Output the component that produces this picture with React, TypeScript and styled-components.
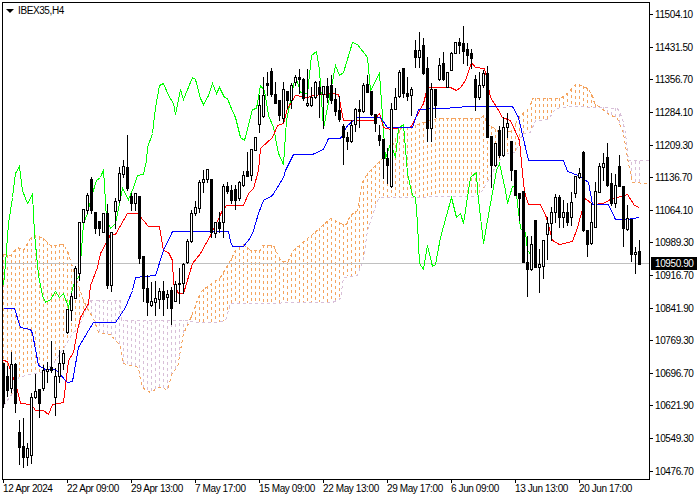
import React from 'react'
import styled, { createGlobalStyle } from 'styled-components'

type Point = [number, number]
// high, body top, body bottom, low, 1 = white candle (all in page pixels)
type Candle = [number, number, number, number, number]

const FIRST_X = 3
const BAR_STEP = 4

const candles: Candle[] = [
  [363, 363, 403, 407, 0], [366, 376, 390, 396, 0], [352, 364, 388, 392, 1], [363, 364, 403, 412, 0],
  [420, 432, 447, 464, 0], [418, 446, 457, 467, 0], [443, 448, 457, 465, 1], [393, 397, 455, 463, 1],
  [374, 391, 397, 398, 1], [389, 389, 403, 417, 0], [365, 370, 388, 390, 1], [362, 369, 371, 382, 1],
  [341, 367, 370, 372, 0], [368, 376, 397, 415, 1], [350, 363, 376, 382, 1], [350, 353, 363, 369, 1],
  [309, 309, 332, 333, 1], [293, 296, 310, 320, 1], [266, 268, 298, 298, 1], [222, 222, 273, 280, 1],
  [209, 209, 222, 222, 1], [193, 195, 210, 213, 1], [177, 179, 210, 213, 0], [212, 212, 228, 233, 0],
  [221, 221, 228, 235, 0], [213, 213, 232, 232, 1], [204, 213, 285, 288, 0], [232, 232, 285, 291, 1],
  [198, 201, 211, 228, 1], [167, 173, 200, 202, 1], [160, 166, 174, 177, 1], [135, 167, 188, 190, 0],
  [193, 196, 203, 210, 0], [193, 193, 203, 210, 1], [196, 196, 258, 263, 0], [256, 256, 288, 301, 0],
  [275, 288, 302, 315, 0], [282, 301, 305, 306, 1], [281, 298, 302, 315, 1], [288, 291, 299, 308, 1],
  [281, 291, 299, 315, 0], [290, 294, 297, 308, 1], [287, 290, 308, 324, 0], [281, 284, 301, 301, 1],
  [268, 283, 284, 303, 1], [263, 264, 283, 293, 1], [239, 241, 262, 263, 1], [210, 213, 241, 242, 1],
  [201, 207, 213, 215, 1], [180, 182, 208, 212, 1], [170, 179, 182, 192, 1], [169, 169, 179, 182, 1],
  [179, 179, 232, 237, 0], [222, 222, 233, 237, 1], [212, 222, 228, 232, 0], [184, 186, 222, 237, 1],
  [182, 186, 191, 193, 0], [185, 190, 200, 203, 0], [185, 189, 200, 209, 0], [181, 182, 198, 200, 1],
  [171, 175, 185, 186, 1], [152, 171, 176, 176, 0], [149, 149, 175, 180, 1], [137, 137, 150, 150, 1],
  [95, 105, 124, 132, 1], [77, 95, 116, 117, 1], [72, 83, 85, 95, 0], [68, 71, 94, 96, 0],
  [82, 94, 103, 103, 0], [100, 100, 115, 120, 0], [82, 89, 118, 122, 1], [91, 91, 100, 108, 0],
  [83, 85, 100, 108, 1], [75, 77, 82, 85, 1], [69, 77, 79, 93, 0], [78, 79, 98, 100, 0],
  [69, 103, 105, 106, 1], [87, 97, 105, 106, 1], [81, 82, 97, 98, 1], [81, 87, 94, 117, 0],
  [86, 86, 94, 128, 1], [78, 86, 97, 102, 0], [75, 85, 100, 103, 0], [88, 99, 111, 115, 0],
  [96, 110, 119, 121, 0], [124, 126, 137, 164, 0], [132, 137, 141, 149, 0], [120, 125, 141, 142, 1],
  [108, 109, 124, 131, 1], [100, 109, 111, 127, 0], [83, 85, 111, 112, 1], [75, 84, 92, 92, 0],
  [91, 91, 114, 115, 0], [114, 114, 123, 131, 0], [125, 135, 140, 145, 0], [139, 139, 158, 178, 0],
  [148, 158, 165, 183, 0], [103, 109, 186, 187, 1], [88, 97, 109, 109, 1], [70, 72, 96, 97, 1],
  [68, 68, 93, 97, 0], [77, 93, 96, 100, 0], [87, 89, 95, 115, 1], [40, 50, 57, 67, 0],
  [32, 50, 57, 67, 1], [38, 45, 73, 74, 0], [57, 68, 128, 141, 0], [83, 89, 128, 141, 1],
  [89, 89, 105, 117, 0], [58, 65, 79, 80, 1], [52, 63, 79, 80, 0], [72, 72, 87, 87, 1],
  [52, 53, 70, 70, 1], [42, 42, 53, 53, 1], [38, 42, 45, 53, 0], [26, 43, 51, 63, 0],
  [43, 49, 55, 65, 0], [49, 53, 58, 68, 0], [75, 79, 97, 110, 0], [72, 85, 97, 99, 1],
  [70, 73, 85, 87, 1], [66, 73, 137, 137, 0], [136, 136, 165, 187, 0], [143, 143, 165, 166, 1],
  [126, 130, 155, 157, 0], [117, 127, 155, 156, 1], [113, 123, 127, 137, 1], [141, 141, 170, 180, 0],
  [170, 170, 195, 195, 0], [193, 193, 198, 220, 0], [191, 191, 262, 262, 0], [236, 262, 269, 296, 0],
  [236, 244, 269, 270, 1], [220, 220, 267, 267, 0], [249, 264, 267, 292, 1], [240, 240, 266, 278, 1],
  [217, 223, 234, 259, 1], [207, 212, 223, 240, 1], [194, 197, 212, 222, 1], [195, 197, 217, 227, 0],
  [200, 212, 217, 227, 1], [203, 212, 222, 225, 0], [192, 202, 217, 225, 1], [176, 176, 193, 197, 1],
  [168, 173, 177, 178, 1], [151, 152, 230, 231, 0], [230, 230, 244, 256, 0], [203, 222, 243, 244, 1],
  [182, 191, 227, 227, 1], [163, 166, 192, 192, 1], [153, 163, 167, 180, 1], [143, 157, 185, 186, 0],
  [173, 183, 203, 205, 0], [174, 185, 203, 207, 1], [155, 166, 186, 186, 0], [186, 186, 228, 246, 0],
  [205, 218, 229, 230, 1], [219, 219, 254, 261, 0], [247, 252, 254, 273, 1], [240, 251, 264, 264, 0],
]

const greenLine: Point[] = [
  [3, 285], [5, 263], [8, 223], [12, 197], [15, 173], [19, 166], [22, 190], [27, 203], [32, 194], [34, 233],
  [38, 275], [42, 295], [45, 302], [50, 299], [55, 291], [59, 297], [63, 293], [68, 307], [73, 284], [79, 275],
  [83, 223], [87, 213], [92, 193], [96, 180], [100, 177], [103, 169], [106, 218], [110, 228], [115, 223],
  [122, 188], [128, 199], [133, 187], [137, 175], [143, 174], [146, 160], [147, 147], [152, 133], [155, 107],
  [159, 85], [163, 83], [168, 95], [173, 103], [175, 114], [180, 89], [183, 99], [192, 77], [195, 79], [200, 98],
  [203, 104], [208, 95], [212, 83], [216, 93], [219, 87], [224, 97], [227, 98], [230, 106], [235, 117], [240, 137],
  [244, 140], [252, 109], [256, 108], [260, 85], [264, 90], [268, 115], [273, 127], [278, 153], [283, 164],
  [286, 120], [295, 75], [300, 92], [307, 93], [311, 55], [316, 51], [319, 70], [323, 128], [335, 65], [339, 75],
  [343, 72], [352, 42], [357, 44], [367, 57], [370, 90], [379, 73], [383, 130], [385, 158], [390, 143], [395, 157],
  [398, 128], [403, 124], [407, 173], [412, 195], [415, 197], [417, 223], [419, 263], [423, 269], [427, 245],
  [432, 266], [435, 264], [440, 237], [451, 197], [456, 217], [460, 213], [463, 223], [470, 177], [476, 172],
  [477, 190], [483, 243], [490, 203], [496, 170], [499, 163], [505, 190], [507, 203], [512, 186], [515, 186],
  [520, 228], [525, 232], [527, 250], [533, 257],
]

const redLine: Point[] = [
  [3, 360], [7, 361], [17, 390], [20, 403], [31, 404], [35, 410], [43, 410], [48, 414], [52, 404], [63, 402],
  [68, 360], [73, 352], [77, 330], [80, 317], [88, 303], [90, 285], [97, 267], [100, 253], [107, 240], [110, 234],
  [115, 234], [127, 213], [137, 213], [143, 220], [148, 226], [159, 226], [163, 250], [168, 252], [172, 260],
  [173, 283], [178, 293], [183, 293], [192, 263], [200, 253], [210, 235], [222, 210], [226, 205], [243, 205],
  [248, 193], [253, 188], [258, 170], [260, 148], [272, 137], [277, 125], [283, 123], [287, 108], [295, 95],
  [307, 97], [313, 95], [330, 93], [338, 94], [343, 120], [373, 120], [379, 113], [383, 127], [390, 129],
  [400, 127], [410, 127], [423, 103], [427, 87], [450, 87], [456, 90], [460, 87], [465, 80], [471, 62], [475, 67],
  [484, 68], [486, 77], [490, 97], [497, 108], [502, 117], [510, 120], [519, 140], [523, 183], [525, 195],
  [528, 204], [540, 204], [546, 217], [552, 240], [559, 244], [572, 241], [577, 227], [585, 198], [592, 204],
  [603, 203], [610, 199], [627, 194], [634, 205], [639, 207],
]

const blueLine: Point[] = [
  [3, 308], [14, 308], [20, 327], [30, 329], [32, 333], [38, 365], [45, 369], [55, 369], [67, 382], [72, 381],
  [78, 347], [88, 330], [93, 322], [115, 322], [125, 307], [132, 290], [135, 277], [155, 275], [163, 250],
  [172, 231], [228, 231], [230, 241], [232, 246], [243, 246], [250, 237], [253, 230], [258, 213], [263, 200],
  [272, 195], [275, 190], [283, 177], [285, 170], [293, 154], [312, 154], [323, 149], [328, 138], [340, 138],
  [347, 125], [357, 117], [380, 117], [387, 127], [412, 127], [418, 109], [460, 107], [463, 106], [512, 106],
  [518, 117], [528, 160], [563, 160], [567, 171], [578, 175], [588, 182], [592, 204], [608, 204], [615, 219],
  [627, 219], [639, 217],
]

const spanA: Point[] = [
  [3, 254], [10, 255], [17, 247], [23, 250], [30, 238], [35, 235], [43, 238], [50, 245], [63, 244], [68, 253],
  [73, 270], [83, 300], [88, 310], [93, 318], [98, 332], [110, 334], [115, 340], [120, 345], [123, 363], [138, 367],
  [140, 380], [143, 388], [150, 392], [158, 387], [167, 389], [172, 372], [177, 367], [183, 333], [188, 323],
  [200, 292], [208, 285], [220, 277], [230, 260], [235, 250], [243, 244], [250, 250], [260, 250], [262, 245],
  [273, 245], [280, 260], [287, 262], [293, 250], [307, 238], [318, 229], [330, 218], [345, 225], [350, 215],
  [357, 210], [362, 182], [367, 173], [377, 163], [390, 150], [400, 128], [415, 125], [420, 123], [437, 118],
  [480, 118], [483, 115], [488, 125], [493, 127], [500, 133], [512, 130], [518, 117], [528, 108], [532, 98],
  [560, 98], [568, 92], [576, 83], [587, 88], [592, 95], [594, 103], [600, 107], [607, 113], [617, 118],
  [623, 133], [628, 163], [632, 182], [647, 183],
]

const spanB: Point[] = [
  [3, 405], [12, 393], [18, 377], [32, 373], [43, 372], [53, 363], [63, 348], [72, 333], [78, 328], [85, 310],
  [90, 300], [120, 300], [121, 320], [185, 320], [197, 322], [217, 322], [225, 320], [230, 303], [332, 302],
  [340, 298], [343, 277], [357, 275], [363, 258], [367, 230], [377, 200], [380, 197], [477, 196], [482, 190],
  [488, 180], [493, 170], [503, 153], [515, 152], [522, 133], [530, 132], [535, 120], [548, 119], [555, 108],
  [570, 106], [600, 107], [617, 108], [622, 118], [625, 133], [628, 160], [648, 160],
]

const prices = [
  '11504.10', '11431.50', '11356.70', '11284.10', '11209.30', '11136.70', '11064.10', '10989.30',
  '10916.70', '10841.90', '10769.30', '10696.70', '10621.90', '10549.30', '10476.70',
]

const times = [
  '12 Apr 2024', '22 Apr 09:00', '29 Apr 13:00', '7 May 17:00', '15 May 09:00',
  '22 May 13:00', '29 May 17:00', '6 Jun 09:00', '13 Jun 13:00', '20 Jun 17:00',
]

const SANDY = '#f4a460'
const THISTLE = '#d8bfd8'

const toPoints = (line: Point[]) => line.map(([x, y]) => `${x + 0.5},${y + 0.5}`).join(' ')

function valueAt(line: Point[], x: number) {
  for (let i = 1; i < line.length; i++) {
    if (x <= line[i][0]) {
      const [x0, y0] = line[i - 1]
      const [x1, y1] = line[i]
      return Math.round(y0 + ((y1 - y0) * (x - x0)) / (x1 - x0 || 1))
    }
  }
  return line[line.length - 1][1]
}

const GlobalStyle = createGlobalStyle`
  html, body {
    margin: 0;
    padding: 0;
    background: #fff;
  }
`

const Terminal = styled.div`
  display: grid;
  grid-template-columns: 650px 50px;
  grid-template-rows: 480px 20px;
  width: 700px;
  height: 500px;
  overflow: hidden;
  background: #fff;
  color: #000;
  font-family: "Liberation Sans", Arial, sans-serif;
  font-size: 10px;
  letter-spacing: -0.4px;
`

const Plot = styled.div`
  position: relative;
  margin: 2px 0 0 2px;
  border: 1px solid #000;
  overflow: hidden;

  svg {
    display: block;
  }
`

const SymbolLabel = styled.div`
  position: absolute;
  left: 3px;
  top: 2px;
  display: flex;
  align-items: center;
  gap: 4px;
  height: 11px;
`

const SymbolArrow = styled.span`
  width: 0;
  height: 0;
  border-left: 4px solid transparent;
  border-right: 4px solid transparent;
  border-top: 4px solid #000;
`

const PriceAxis = styled.div`
  position: relative;
  display: flex;
  flex-direction: column;
  gap: 15px;
  padding-top: 6px;
`

const PriceRow = styled.div`
  display: flex;
  align-items: center;
  gap: 2px;
  height: 18px;
`

const PriceTick = styled.span`
  width: 3px;
  height: 1px;
  background: #000;
`

const PriceTag = styled.div`
  position: absolute;
  left: 1px;
  top: 257px;
  width: 46px;
  height: 13px;
  padding-left: 4px;
  box-sizing: border-box;
  background: #000;
  color: #fff;
  line-height: 13px;
`

const TimeAxis = styled.div`
  grid-column: 1 / -1;
  display: flex;
  padding-left: 3px;
`

const TimeCell = styled.div`
  flex: 0 0 64px;
  white-space: nowrap;
`

const TimeTick = styled.div`
  width: 1px;
  height: 3px;
  background: #000;
`

const TimeText = styled.div`
  line-height: 12px;
`

function Cloud() {
  const columns = candles.map((_, i) => {
    const x = FIRST_X + i * BAR_STEP
    const a = valueAt(spanA, x)
    const b = valueAt(spanB, x)
    return (
      <line
        key={x}
        x1={x + 0.5}
        x2={x + 0.5}
        y1={a}
        y2={b}
        stroke={a < b ? SANDY : THISTLE}
        strokeDasharray="3 3"
      />
    )
  })

  return (
    <g shapeRendering="crispEdges">
      {columns}
      <polyline points={toPoints(spanB)} fill="none" stroke={THISTLE} strokeDasharray="3 3" />
      <polyline points={toPoints(spanA)} fill="none" stroke={SANDY} strokeDasharray="3 3" />
    </g>
  )
}

function Candles() {
  return (
    <g shapeRendering="crispEdges">
      {candles.map(([high, top, bottom, low, up], i) => {
        const x = FIRST_X + i * BAR_STEP
        return (
          <g key={x}>
            <line x1={x + 0.5} x2={x + 0.5} y1={high} y2={low + 1} stroke="#000" />
            <rect
              x={x - 0.5}
              y={top + 0.5}
              width={2}
              height={Math.max(bottom - top, 1)}
              fill={up ? '#fff' : '#000'}
              stroke="#000"
            />
          </g>
        )
      })}
    </g>
  )
}

function Chart() {
  return (
    <svg width={646} height={476} viewBox="3 3 646 476">
      <Cloud />
      <line x1={3} x2={649} y1={263.5} y2={263.5} stroke="#c0c0c0" shapeRendering="crispEdges" />
      <g fill="none" shapeRendering="crispEdges">
        <polyline points={toPoints(greenLine)} stroke="#00ff00" />
        <polyline points={toPoints(redLine)} stroke="#ff0000" />
        <polyline points={toPoints(blueLine)} stroke="#0000ff" />
      </g>
      <Candles />
    </svg>
  )
}

export default function App() {
  return (
    <Terminal>
      <GlobalStyle />
      <Plot>
        <Chart />
        <SymbolLabel>
          <SymbolArrow />
          IBEX35,H4
        </SymbolLabel>
      </Plot>
      <PriceAxis>
        {prices.map((price) => (
          <PriceRow key={price}>
            <PriceTick />
            {price}
          </PriceRow>
        ))}
        <PriceTag>10950.90</PriceTag>
      </PriceAxis>
      <TimeAxis>
        {times.map((time) => (
          <TimeCell key={time}>
            <TimeTick />
            <TimeText>{time}</TimeText>
          </TimeCell>
        ))}
      </TimeAxis>
    </Terminal>
  )
}
